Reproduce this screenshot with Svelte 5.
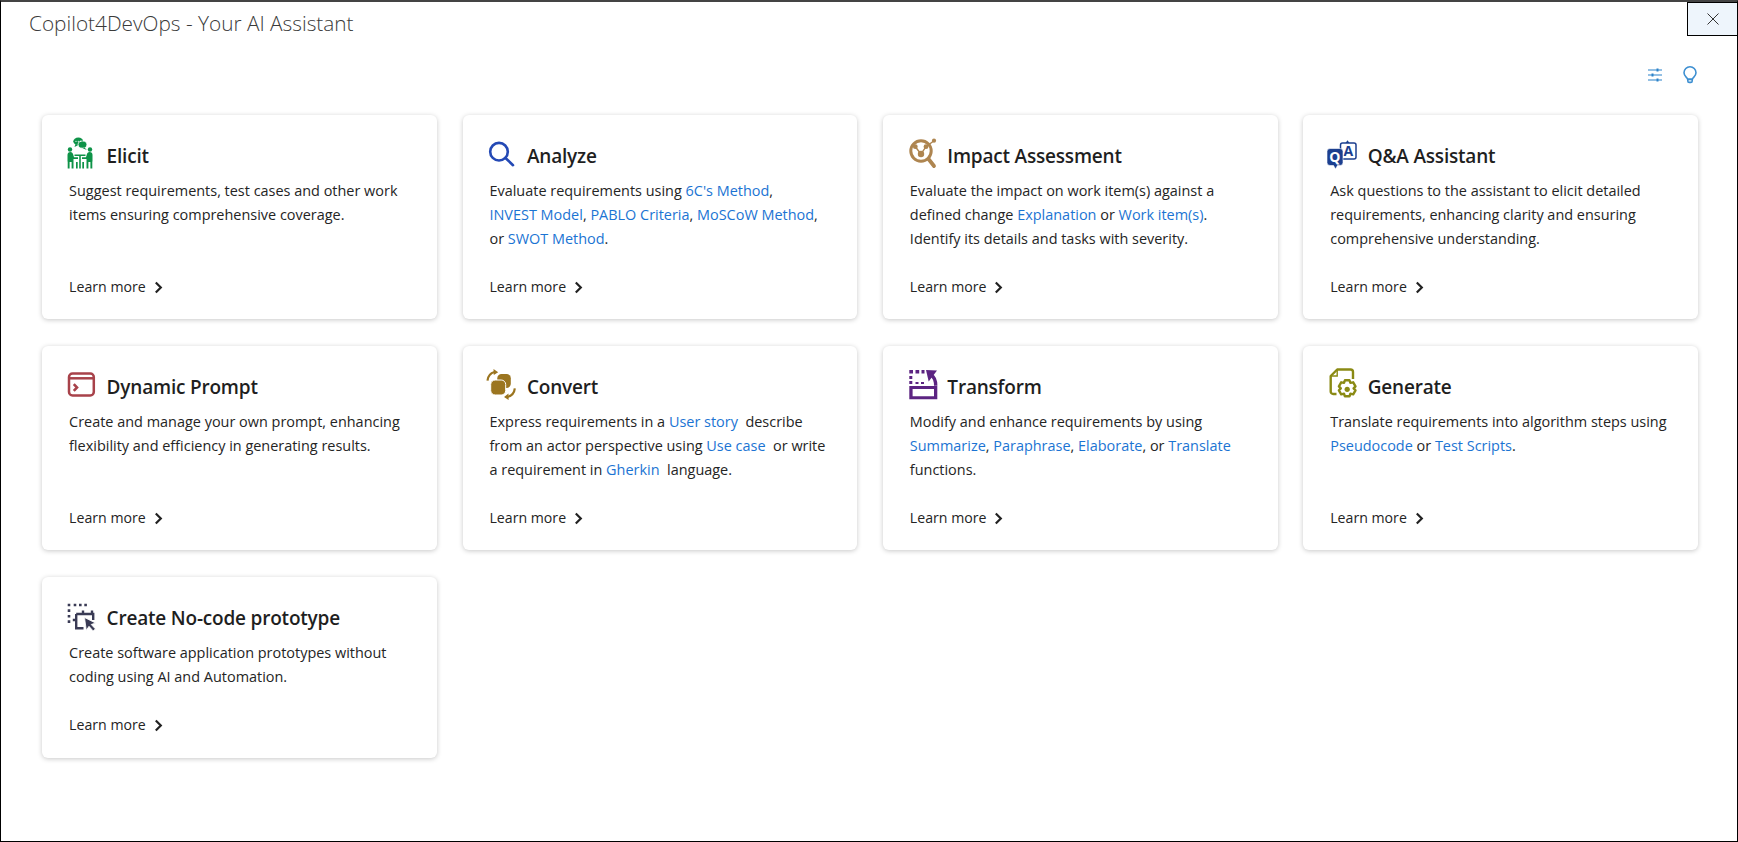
<script>
  const L = (t) => ({ t, a: true });
  const T = (t) => ({ t, a: false });
  const cards = [
    { id: 'elicit', title: 'Elicit', lines: [[T('Suggest requirements, test cases and other work')], [T('items ensuring comprehensive coverage.')]] },
    { id: 'analyze', title: 'Analyze', lines: [[T('Evaluate requirements using '), L("6C's Method"), T(',')], [L('INVEST Model'), T(', '), L('PABLO Criteria'), T(', '), L('MoSCoW Method'), T(',')], [T('or '), L('SWOT Method'), T('.')]] },
    { id: 'impact', title: 'Impact Assessment', lines: [[T('Evaluate the impact on work item(s) against a')], [T('defined change '), L('Explanation'), T(' or '), L('Work item(s)'), T('.')], [T('Identify its details and tasks with severity.')]] },
    { id: 'qa', title: 'Q&A Assistant', lines: [[T('Ask questions to the assistant to elicit detailed')], [T('requirements, enhancing clarity and ensuring')], [T('comprehensive understanding.')]] },
    { id: 'prompt', title: 'Dynamic Prompt', lines: [[T('Create and manage your own prompt, enhancing')], [T('flexibility and efficiency in generating results.')]] },
    { id: 'convert', title: 'Convert', lines: [[T('Express requirements in a '), L('User story'), T('  describe')], [T('from an actor perspective using '), L('Use case'), T('  or write')], [T('a requirement in '), L('Gherkin'), T('  language.')]] },
    { id: 'transform', title: 'Transform', lines: [[T('Modify and enhance requirements by using')], [L('Summarize'), T(', '), L('Paraphrase'), T(', '), L('Elaborate'), T(', or '), L('Translate')], [T('functions.')]] },
    { id: 'generate', title: 'Generate', lines: [[T('Translate requirements into algorithm steps using')], [L('Pseudocode'), T(' or '), L('Test Scripts'), T('.')]] },
    { id: 'nocode', title: 'Create No-code prototype', lines: [[T('Create software application prototypes without')], [T('coding using AI and Automation.')]] }
  ];
</script>

<div class="window">
  <header class="titlebar">
    <h1>Copilot4DevOps - Your AI Assistant</h1>
    <button class="close" aria-label="Close">
      <svg width="14" height="14" viewBox="0 0 14 14"><path d="M1.5 1.5 12.5 12.5M12.5 1.5 1.5 12.5" stroke="#333" stroke-width="1" fill="none"/></svg>
    </button>
  </header>

  <div class="tools">
    <svg width="16" height="16" viewBox="0 0 16 16" fill="none" stroke="#2b82c9" stroke-width="1.1">
      <path d="M1 3h14M1 8h14M1 13h14"/>
      <path d="M9.5 1.6h2v2.8h-2zM4.5 6.6h2v2.8h-2zM9.5 11.6h2v2.8h-2z" fill="#2b82c9" stroke="none"/>
    </svg>
    <svg width="16" height="18" viewBox="0 0 16 18" fill="none" stroke="#3d8fd1" stroke-width="1.6">
      <path d="M5.6 13.2C5.4 11.6 2 10.4 2 6.8a6 6 0 0 1 12 0c0 3.6-3.4 4.8-3.6 6.4z"/>
      <path d="M5.8 13.4h4.4v1.6a1.4 1.4 0 0 1-1.4 1.4H7.2a1.4 1.4 0 0 1-1.4-1.4z"/>
    </svg>
  </div>

  <main class="grid">
    {#each cards as card}
      <article class="card">
        <div class="head">
          <svg class="icon" viewBox="0 0 32 32" width="32" height="32">
            {#if card.id === 'elicit'}
              <g transform="translate(-1 0)">
                <g fill="#0e9348">
                  <ellipse cx="13.3" cy="4.300" rx="5" ry="3.700"/>
                  <path d="M10.500 7 9.500 10l4-2z"/>
                  <ellipse cx="17.500" cy="7.600" rx="4.400" ry="3.600" stroke="#fff" stroke-width=".8"/>
                  <path d="M19.500 10.500 21.800 13l-4-1.800z"/>
                  <circle cx="5" cy="12.500" r="2.200"/><circle cx="25" cy="12.500" r="2.200"/>
                  <path d="M2.500 18c0-2 1-3 3-3 1.500 0 2.200 1 2.700 2.500l.8 2.800H13v1.800H8.500v9.400H6.600v-6.500H4.600v6.500H2.700v-6.900H2.500z"/>
                  <path d="M27.500 18c0-2-1-3-3-3-1.500 0-2.200 1-2.700 2.500l-.8 2.800H17v1.800h4.500v9.400h1.900v-6.500h2v6.500h1.900v-6.900h.2z"/>
                  <path d="M9.500 17.500h11v1.500h-11zM14.200 19h1.600v12.500h-1.600zM11 25h1.700v6.500H11zM17.300 25H19v6.500h-1.700z"/>
                </g>
                <circle cx="11" cy="4.300" r=".6" fill="#fff"/><circle cx="13.300" cy="4.300" r=".6" fill="#fff"/><circle cx="15.600" cy="4.300" r=".6" fill="#fff"/>
              </g>
            {:else if card.id === 'analyze'}
              <g fill="none" stroke="#2449b5" stroke-width="2.600" stroke-linecap="round">
                <circle cx="13" cy="14.700" r="8.800"/><path d="M19.500 21 27 28.200"/>
              </g>
            {:else if card.id === 'impact'}
              <g fill="none" stroke="#ae8550" stroke-linecap="round">
                <circle cx="14" cy="14" r="10.200" stroke-width="3"/>
                <path d="M21.500 22 27 29" stroke-width="3.800"/>
                <path d="M8.300 9.700 14 17 19 9.700 27 3.700" stroke-width="1.400"/>
              </g>
              <g fill="#ae8550"><circle cx="8.300" cy="9.700" r="2.400"/><circle cx="14" cy="17" r="3.200"/><circle cx="19" cy="9.700" r="2.400"/><circle cx="27" cy="3.700" r="2.100"/></g>
            {:else if card.id === 'qa'}
              <g transform="translate(0 1)">
                <path d="M15.500 5h11.500a2 2 0 0 1 2 2v12a2 2 0 0 1-2 2H15.500a2 2 0 0 1-2-2V7a2 2 0 0 1 2-2z" fill="#fff" stroke="#1c3f8f" stroke-width="1.500"/>
                <path d="M18.500 5 20.500 2.200 22.500 5z" fill="#1c3f8f"/>
                <text class="glyph" x="21.300" y="17.500" font-size="14" fill="#1c3f8f">A</text>
                <path d="M3 10.500h10a3 3 0 0 1 3 3v11a3 3 0 0 1-3 3h-2.500L8.500 31 6.500 27.500H3a3 3 0 0 1-3-3v-11a3 3 0 0 1 3-3z" fill="#1c3f8f" stroke="#fff" stroke-width=".6"/>
                <text class="glyph" x="7.800" y="23.500" font-size="14" fill="#fff">Q</text>
              </g>
            {:else if card.id === 'prompt'}
              <g fill="none" stroke="#a8424a" stroke-width="2.500">
                <rect x="3" y="5.500" width="24.800" height="22" rx="3.500"/><path d="M3 10.300h24.800"/>
                <path d="M7.800 16.200 11 19.500 7.800 22.800" stroke-width="2.600"/>
              </g>
            {:else if card.id === 'convert'}
              <rect x="11.300" y="6" width="13.500" height="14" rx="4.200" fill="#9b7520"/>
              <rect x="4.700" y="12" width="15" height="15" rx="4.500" fill="#9b7520" stroke="#fff" stroke-width="1"/>
              <g fill="none" stroke="#9b7520" stroke-width="2.200">
                <path d="M1.500 12.700C1.900 8.500 4.500 5 8.500 4"/><path d="M28.800 20.300c-.4 4-3 7.300-7 8.500"/>
              </g>
              <path d="M7.500 1 12.200 4.200 7.800 7zM22.500 25.500 18 29l4.600 3z" fill="#9b7520"/>
            {:else if card.id === 'transform'}
              <g fill="#5c2482">
                <path d="M2.300 2h3.700v3.400H2.300zM8.500 2h3.700v3.400H8.500zM14.500 2h3v3.400h-3zM2.300 8h3v3h-3zM2.300 13h3v3h-3zM8.500 14h3v2h-3zM14 14h3v2h-3z"/>
                <path d="M2.300 18h28v13.300h-28zM5.600 21v7.200h21.400V21z"/>
                <path d="M19 2 30 2.500 21.700 13.500z"/>
              </g>
              <path d="M24 7C27.500 9 28.700 12.500 28.700 17.800" fill="none" stroke="#5c2482" stroke-width="3.400"/>
            {:else if card.id === 'generate'}
              <g transform="translate(1.500 0)">
                <path d="M8 26H4.700a2.500 2.500 0 0 1-2.500-2.500V8L8.700 1.500H22a2.500 2.500 0 0 1 2.500 2.500v7" fill="none" stroke="#8a8a14" stroke-width="2.400" stroke-linejoin="round"/>
                <path d="M8.700 1.500V8H2.200" fill="none" stroke="#8a8a14" stroke-width="1.400"/>
                <path d="M16.400 12.300h4.600l.9 2.600 2.800-.6 2.300 4-1.900 2 1.900 2-2.300 4-2.800-.6-.9 2.600h-4.600l-.9-2.600-2.800.6-2.300-4 1.900-2-1.900-2 2.300-4 2.800.6z" fill="#fff" stroke="#8a8a14" stroke-width="2.400" stroke-linejoin="round"/>
                <circle cx="18.700" cy="21.300" r="2.600" fill="#8a8a14"/>
              </g>
            {:else}
              <g fill="#3a3b55">
                <path d="M1.700 4.700h2.600v2.600H1.700zM7.700 4.700h2.600v2.600H7.700zM13 4.700h2.600v2.600H13zM18.300 4.700h2.600v2.600h-2.600zM1.700 10.300h2.600v2.600H1.700zM1.700 16h2.600v2.600H1.700zM1.700 21.300h2.600v2.600H1.700z"/>
                <path d="M18.500 18.500 29.500 24l-4.300 1.500 4.200 4.400-2.300 2-4.100-4.600-2.700 4z" stroke="#fff" stroke-width=".8"/>
              </g>
              <g fill="none" stroke="#3a3b55" stroke-width="2.400">
                <path d="M10.200 15H27.200V21M10.200 15V29.200H17.500M17 11.500V15M26 11.500V15M6.800 21H10.200"/>
              </g>
            {/if}
          </svg>
          <h2>{card.title}</h2>
        </div>
        <p class="desc">
          {#each card.lines as line}
            <span class="line">{#each line as seg}{#if seg.a}<a href="#top">{seg.t}</a>{:else}{seg.t}{/if}{/each}</span>
          {/each}
        </p>
        <a class="more" href="#top">
          Learn more
          <svg width="9" height="13" viewBox="0 0 9 13"><path d="M1.800 1.500 6.800 6.500 1.800 11.500" fill="none" stroke="#222" stroke-width="2.200"/></svg>
        </a>
      </article>
    {/each}
  </main>
</div>

<style>
  :global(body) {
    margin: 0;
    background: #fff;
    font-family: "Open Sans", "Noto Sans", sans-serif;
    color: #242424;
  }
  .window {
    box-sizing: border-box;
    height: 842px;
    border: 1px solid #000;
    border-top-color: #444;
    border-top-width: 2px;
    display: flex;
    flex-direction: column;
    overflow: hidden;
  }
  .titlebar {
    display: flex;
    justify-content: space-between;
    align-items: flex-start;
    padding-left: 28px;
    height: 34px;
  }
  h1 {
    margin: 0;
    font-size: 20.800px;
    line-height: 42px;
    height: 34px;
    font-weight: 300;
    color: #3a3a3a;
  }
  .close {
    box-sizing: border-box;
    width: 50px;
    height: 34px;
    padding: 0;
    border: 1px solid #000;
    border-right: 0;
    background: #eef5fc;
    display: flex;
    align-items: center;
    justify-content: center;
  }
  .tools {
    display: flex;
    justify-content: flex-end;
    align-items: center;
    gap: 19px;
    padding: 30px 39px 0 0;
    height: 18px;
  }
  .grid {
    display: grid;
    grid-template-columns: repeat(4, 394.700px);
    grid-auto-rows: auto;
    column-gap: 25.700px;
    row-gap: 27px;
    padding: 31px 0 0 41.300px;
    align-content: start;
  }
  .card {
    background: #fff;
    border-radius: 6px;
    box-shadow: 0 1px 5px rgba(0, 0, 0, 0.22);
    padding: 22px 26px 20.200px 26.800px;
    display: flex;
    flex-direction: column;
  }
  .head {
    display: flex;
    align-items: center;
    gap: 8.500px;
    margin-left: -3px;
    height: 34px;
  }
  .icon {
    flex: none;
    margin-top: -2px;
    overflow: visible;
  }
  .glyph {
    font-family: "Open Sans", sans-serif;
    font-weight: 700;
    text-anchor: middle;
  }
  h2 {
    margin: 4px 0 0;
    font-size: 19px;
    font-weight: 600;
    color: #1f1f1f;
    line-height: 28px;
    letter-spacing: -0.200px;
  }
  .desc {
    margin: 8px 0 24px;
    font-size: 14.450px;
    line-height: 24px;
    color: #242424;
  }
  .line {
    display: block;
    white-space: pre;
  }
  .desc a {
    color: #1b74d3;
    text-decoration: none;
  }
  .more {
    margin-top: auto;
    display: flex;
    align-items: center;
    gap: 8px;
    font-size: 14.150px;
    line-height: 24px;
    color: #242424;
    text-decoration: none;
  }
</style>
